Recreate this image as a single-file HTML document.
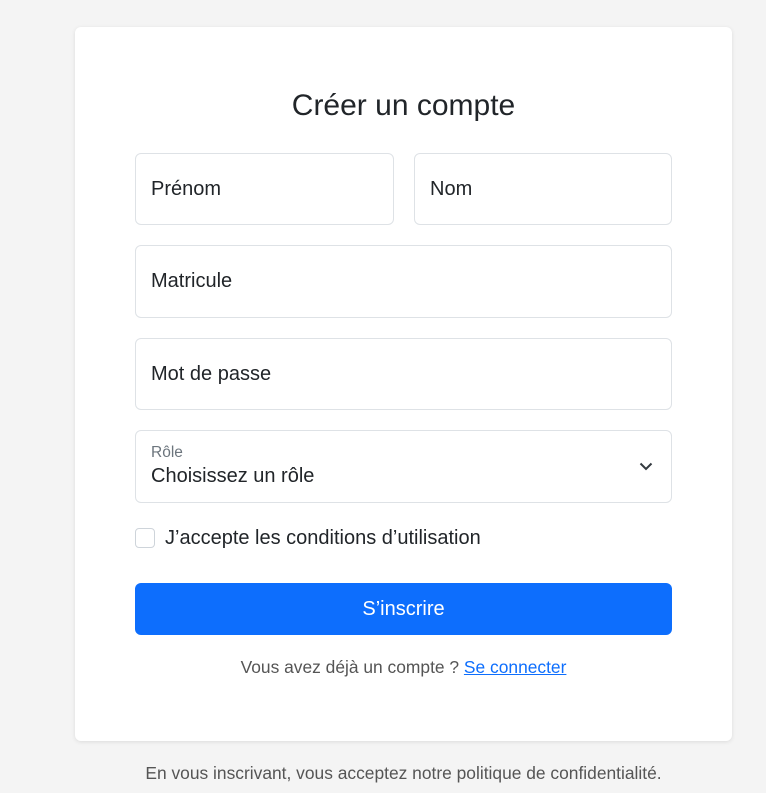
<!DOCTYPE html>
<html><head><meta charset="utf-8"><style>
*{box-sizing:border-box;margin:0;padding:0}
body{width:766px;height:793px;background:#f4f4f4;font-family:"Liberation Sans",Arial,sans-serif;color:#212529;position:relative;overflow:hidden}
.card{position:absolute;left:75px;top:27px;width:657px;height:714px;background:#fff;border-radius:6px;box-shadow:0 1px 4px rgba(0,0,0,.1)}
h1{position:absolute;left:75px;width:657px;top:88px;text-align:center;font-weight:400;font-size:30px;line-height:36px}
.f{position:absolute;border:1px solid #dee2e6;border-radius:6px;background:#fff;font-size:20px;padding-left:15px;display:flex;align-items:center}
.lbl{position:absolute;left:151px;top:444px;font-size:15.5px;color:#6c757d}
.cb{position:absolute;left:135px;top:528px;width:20px;height:20px;border:1px solid #ced4da;border-radius:4px}
.ct{position:absolute;left:165px;top:527px;font-size:20px}
.btn{position:absolute;left:135px;top:583px;width:537px;height:52px;background:#0d6efd;border-radius:6px;color:#fff;font-size:20px;text-align:center;line-height:52px}
.lk{position:absolute;left:75px;width:657px;top:657px;text-align:center;font-size:17.4px;color:#555}
.lk a{color:#0d6efd;text-decoration:underline}
.ft{position:absolute;left:75px;width:657px;top:763px;text-align:center;font-size:17.4px;color:#555}
</style></head><body>
<div class="card"></div>
<h1>Créer un compte</h1>
<div class="f" style="left:135px;top:153px;width:259px;height:72px">Prénom</div>
<div class="f" style="left:414px;top:153px;width:258px;height:72px">Nom</div>
<div class="f" style="left:135px;top:245px;width:537px;height:73px">Matricule</div>
<div class="f" style="left:135px;top:338px;width:537px;height:72px">Mot de passe</div>
<div class="f" style="left:135px;top:430px;width:537px;height:73px;align-items:flex-start;padding-top:34px">Choisissez un rôle
<svg style="position:absolute;right:18px;top:30px" width="14" height="10" viewBox="0 0 14 10"><path d="M1.5 2.5l5.5 5.5 5.5-5.5" fill="none" stroke="#343a40" stroke-width="2"/></svg></div>
<div class="lbl">Rôle</div>
<div class="cb"></div>
<div class="ct">J’accepte les conditions d’utilisation</div>
<div class="btn">S’inscrire</div>
<div class="lk">Vous avez déjà un compte ? <a>Se connecter</a></div>
<div class="ft">En vous inscrivant, vous acceptez notre politique de confidentialité.</div>
</body></html>
